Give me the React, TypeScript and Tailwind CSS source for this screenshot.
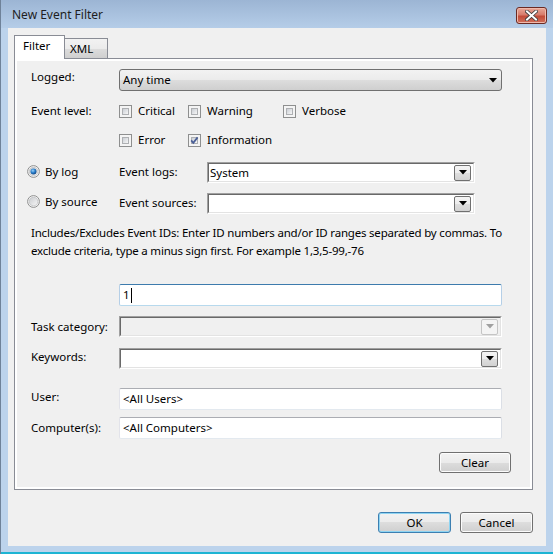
import React from 'react';

const Arrow = ({ color = '#000' }: { color?: string }) => (
  <svg width="8" height="5" viewBox="0 0 8 5">
    <polygon points="0,0 8,0 4,4.5" fill={color} />
  </svg>
);

const Checkbox = ({ checked, label, width }: { checked?: boolean; label: string; width: string }) => (
  <div className={`flex items-center ${width}`}>
    <span className="relative w-[13px] h-[13px] border border-[#8e8f8f] bg-[#f4f4f4] p-[2px] shrink-0">
      <span className="block w-full h-full border border-[#aeb0b3] bg-[linear-gradient(135deg,#cbcfd5,#f6f6f6)]" />
      {checked && (
        <svg className="absolute left-0 top-0" width="11" height="11" viewBox="0 0 11 11">
          <path d="M2.2 5.4 L4.3 7.8 L8.6 2.4" stroke="#4a5f97" strokeWidth="1.7" fill="none" />
        </svg>
      )}
    </span>
    <span className="ml-[6px] mb-px">{label}</span>
  </div>
);

const Radio = ({ checked }: { checked?: boolean }) => (
  <svg width="13" height="13" viewBox="0 0 13 13" className="shrink-0">
    <defs>
      <linearGradient id="rbg" x1="0" y1="0" x2="1" y2="1">
        <stop offset="0" stopColor="#c9cbcf" />
        <stop offset="1" stopColor="#f7f7f7" />
      </linearGradient>
      <radialGradient id="rdot" cx="0.4" cy="0.35" r="0.7">
        <stop offset="0" stopColor="#9bd2f8" />
        <stop offset="0.5" stopColor="#2a7fcc" />
        <stop offset="1" stopColor="#0d3f7a" />
      </radialGradient>
    </defs>
    <circle cx="6.5" cy="6.5" r="5.9" fill="#f4f4f4" stroke="#8e8f8f" strokeWidth="1" />
    <circle cx="6.5" cy="6.5" r="4.3" fill="url(#rbg)" stroke="#b3b5b8" strokeWidth="0.6" />
    {checked && <circle cx="6.5" cy="6.5" r="3" fill="url(#rdot)" />}
  </svg>
);

const DropBtn = ({ disabled }: { disabled?: boolean }) => (
  <span
    className={`w-[17px] h-[16px] rounded-[2px] border flex items-center justify-center ${
      disabled
        ? 'border-[#c5c5c5] bg-[#f4f4f4]'
        : 'border-[#707070] bg-[linear-gradient(#f4f4f4_0%,#ececec_50%,#dedede_50%,#d2d2d2_100%)]'
    }`}
  >
    <Arrow color={disabled ? '#a0a0a0' : '#000'} />
  </span>
);

const SunkenCombo = ({ width, value, disabled }: { width: string; value?: string; disabled?: boolean }) => (
  <div className={`${width} h-[21px] border border-t-[#a0a0a0] border-l-[#a0a0a0] border-r-[#ffffff] border-b-[#ffffff]`}>
    <div
      className={`h-full flex items-center justify-between pl-px pr-[2px] border border-t-[#696969] border-l-[#696969] border-r-[#e3e3e3] border-b-[#e3e3e3] ${
        disabled ? 'bg-[#f0f0f0]' : 'bg-white'
      }`}
    >
      <span>{value}</span>
      <DropBtn disabled={disabled} />
    </div>
  </div>
);

const TextBox = ({ value }: { value: string }) => (
  <div className="w-[383px] h-[22px] rounded-[2px] border border-t-[#abadb3] border-l-[#e2e3ea] border-r-[#dbdfe6] border-b-[#e3e9ef] bg-white flex items-center pl-[3px]">
    {value}
  </div>
);

const Button = ({ label, isDefault, width }: { label: string; isDefault?: boolean; width: string }) => (
  <div
    className={`${width} rounded-[3px] border flex items-center justify-center bg-[linear-gradient(#f2f2f2_0%,#ebebeb_50%,#dddddd_50%,#cfcfcf_100%)] ${
      isDefault ? 'border-[#3c7fb1] shadow-[inset_0_0_0_1px_#8ed4f2]' : 'border-[#707070] shadow-[inset_0_0_0_1px_#fcfcfc]'
    }`}
  >
    {label}
  </div>
);

const Label = ({ children, lift = '' }: { children: React.ReactNode; lift?: string }) => (
  <span className={`w-[88px] shrink-0 ${lift}`}>{children}</span>
);

export default function App() {
  return (
    <div className="w-[553px] h-[554px] flex flex-col bg-[#bcd3ec] font-['Noto_Sans',sans-serif] text-[11.5px] text-black leading-none overflow-hidden border-l border-[#6f8299]">
      {/* title bar */}
      <div className="h-[28px] shrink-0 flex items-start justify-between bg-[linear-gradient(#9cb5d4,#b5cde8)]">
        <span className="pl-[11px] pt-[9px] text-[12px] text-[#1e1e1e]">New Event Filter</span>
        <div className="mt-[7px] mr-[6px] w-[31px] h-[17px] rounded-[3px] border border-[#6b2a23] bg-[linear-gradient(#e8a898_0%,#d77c6c_45%,#c24b38_55%,#d0705c_100%)] flex items-center justify-center shadow-[inset_0_0_0_1px_#f0b9ab]">
          <svg width="13" height="11" viewBox="0 0 13 11">
            <path d="M2 1.5 L11 9.5 M11 1.5 L2 9.5" stroke="#3a3a3a" strokeWidth="3.6" strokeLinecap="square" />
            <path d="M2 1.5 L11 9.5 M11 1.5 L2 9.5" stroke="#ffffff" strokeWidth="2" strokeLinecap="square" />
          </svg>
        </div>
      </div>

      {/* client */}
      <div className="flex shrink-0">
        <div className="w-[7px] shrink-0" />
        <div className="w-[538px] h-[518px] bg-[#f0f0f0] pl-[6px] pt-[7px] flex flex-col">
          {/* tabs */}
          <div className="flex items-end h-[24px] -mb-px relative z-10">
            <div className="w-[51px] h-[24px] bg-white border border-b-0 border-[#898c95] flex items-center pl-[8px] pb-[3px]">
              Filter
            </div>
            <div className="w-[44px] h-[21px] -ml-px border border-[#898c95] bg-[linear-gradient(#f2f2f2_0%,#ebebeb_50%,#dddddd_50%,#cfcfcf_100%)] flex items-center pl-[5px]">
              XML
            </div>
          </div>

          {/* panel */}
          <div className="w-[519px] h-[432px] border border-[#898c95] bg-[#f0f0f0] shadow-[inset_0_0_0_2px_#ffffff] flex flex-col pl-[16px]">
            <div className="flex items-center h-[22px] mt-[10px]">
              <Label lift="mb-[7px]">Logged:</Label>
              <div className="w-[383px] h-[22px] rounded-[3px] border border-[#707070] bg-[linear-gradient(#f2f2f2_0%,#ebebeb_50%,#dddddd_50%,#cfcfcf_100%)] flex items-center justify-between pl-[3px] pr-[4px]">
                <span>Any time</span>
                <Arrow />
              </div>
            </div>

            <div className="flex items-center h-[14px] mt-[13px]">
              <Label lift="mb-px">Event level:</Label>
              <Checkbox label="Critical" width="w-[69px]" />
              <Checkbox label="Warning" width="w-[95px]" />
              <Checkbox label="Verbose" width="w-[80px]" />
            </div>
            <div className="flex items-center h-[14px] mt-[15px]">
              <Label>{''}</Label>
              <Checkbox label="Error" width="w-[69px]" />
              <Checkbox checked label="Information" width="w-[95px]" />
            </div>

            <div className="flex items-center h-[21px] mt-[15px] -ml-[4px]">
              <span className="w-[92px] shrink-0 flex items-center mb-[2px]">
                <Radio checked />
                <span className="ml-[5px]">By log</span>
              </span>
              <span className="w-[88px] shrink-0 mb-[2px]">Event logs:</span>
              <SunkenCombo width="w-[268px]" value="System" />
            </div>
            <div className="flex items-center h-[21px] mt-[10px] -ml-[4px]">
              <span className="w-[92px] shrink-0 flex items-center mb-[4px]">
                <Radio />
                <span className="ml-[5px]">By source</span>
              </span>
              <span className="w-[88px] shrink-0 mb-[2px]">Event sources:</span>
              <SunkenCombo width="w-[268px]" />
            </div>

            <p className="mt-[10px] leading-[18px] whitespace-nowrap tracking-[-0.2px]">
              Includes/Excludes Event IDs: Enter ID numbers and/or ID ranges separated by commas. To
              <br />
              exclude criteria, type a minus sign first. For example 1,3,5-99,-76
            </p>

            <div className="flex items-center h-[22px] mt-[24px]">
              <Label>{''}</Label>
              <div className="w-[383px] h-[22px] rounded-[2px] border border-t-[#3d7bad] border-l-[#b5cfe7] border-r-[#b5cfe7] border-b-[#b7d9ed] bg-white flex items-center pl-[3px]">
                <span>1</span>
                <span className="w-px h-[15px] bg-black ml-px" />
              </div>
            </div>

            <div className="flex items-center h-[21px] mt-[10px]">
              <Label>Task category:</Label>
              <SunkenCombo width="w-[383px]" disabled />
            </div>
            <div className="flex items-center h-[21px] mt-[11px]">
              <Label lift="mb-[3px]">Keywords:</Label>
              <SunkenCombo width="w-[383px]" />
            </div>

            <div className="flex items-center h-[22px] mt-[19px]">
              <Label lift="mb-[5px]">User:</Label>
              <TextBox value="<All Users>" />
            </div>
            <div className="flex items-center h-[22px] mt-[7px]">
              <Label lift="mb-px">Computer(s):</Label>
              <TextBox value="<All Computers>" />
            </div>

            <div className="flex justify-end mt-[13px] pr-[21px]">
              <Button label="Clear" width="w-[72px] h-[21px]" />
            </div>
          </div>

          {/* dialog buttons */}
          <div className="flex justify-end gap-[9px] mt-[22px] pr-[13px]">
            <Button label="OK" isDefault width="w-[73px] h-[21px]" />
            <Button label="Cancel" width="w-[73px] h-[21px]" />
          </div>
        </div>
        <div className="flex-1" />
      </div>

      {/* bottom frame */}
      <div className="flex-1 flex flex-col justify-end">
        <div className="h-[2px] bg-[#1db4d3]" />
      </div>
    </div>
  );
}
